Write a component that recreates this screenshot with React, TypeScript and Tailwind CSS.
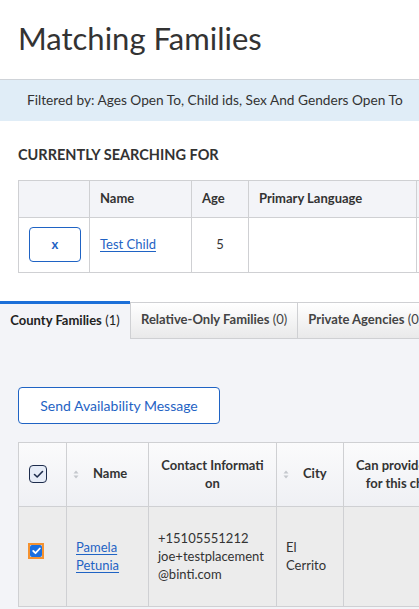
import React from "react";

const link = "text-[#1f63c4] underline underline-offset-2";

function SortIcon() {
  return (
    <svg width="6" height="9" viewBox="0 0 6 9" className="shrink-0">
      <path d="M3 0.5 L5.5 3.5 H0.5 Z" fill="#c4c7cc" />
      <path d="M3 8.5 L5.5 5.5 H0.5 Z" fill="#c4c7cc" />
    </svg>
  );
}

export default function App() {
  return (
    <div className="w-[419px] h-[609px] overflow-hidden bg-white text-[#333] font-['Lato','Noto_Sans',sans-serif]">
      {/* Title */}
      <div className="h-[79px] px-[18px] flex items-center">
        <h1 className="text-[31px] leading-none pb-[2px]">Matching Families</h1>
      </div>

      {/* Filter bar */}
      <div className="h-[42px] border-t border-[#cfd3d8] bg-[#e0edf7] px-[27px] flex items-center text-[13.7px] whitespace-nowrap">
        Filtered by: Ages Open To, Child ids, Sex And Genders Open To
      </div>

      {/* Currently searching */}
      <div className="px-[18px] pt-[27px]">
        <h2 className="text-[14.5px] font-bold leading-none whitespace-nowrap">CURRENTLY SEARCHING FOR</h2>
        <table className="mt-[17px] border-collapse text-[13px] w-[500px] table-fixed">
          <colgroup>
            <col className="w-[71px]" />
            <col className="w-[102px]" />
            <col className="w-[57px]" />
            <col className="w-[168px]" />
            <col />
          </colgroup>
          <thead>
            <tr className="h-[37px] bg-[#f3f4f8]">
              <th className="border border-[#cfd0d3]"></th>
              <th className="border border-[#cfd0d3] text-left font-bold px-[10px]">Name</th>
              <th className="border border-[#cfd0d3] text-left font-bold px-[10px]">Age</th>
              <th className="border border-[#cfd0d3] text-left font-bold px-[10px]">Primary Language</th>
              <th className="border border-[#cfd0d3]"></th>
            </tr>
          </thead>
          <tbody>
            <tr className="h-[55px]">
              <td className="border border-[#cfd0d3] px-[10px] align-middle">
                <button className="w-[52px] h-[35px] border border-[#1f63c4] rounded-[4px] text-[#1f63c4] font-bold text-[13px] flex items-center justify-center bg-white">
                  x
                </button>
              </td>
              <td className="border border-[#cfd0d3] px-[10px] align-middle">
                <a className={link} href="#">Test Child</a>
              </td>
              <td className="border border-[#cfd0d3] text-center align-middle">5</td>
              <td className="border border-[#cfd0d3]"></td>
              <td className="border border-[#cfd0d3]"></td>
            </tr>
          </tbody>
        </table>
      </div>

      {/* Tabs */}
      <div className="mt-[28px] flex items-end text-[13px] whitespace-nowrap">
        <div className="shrink-0 w-[130px] h-[38px] border-t-[3px] border-[#1b6fd8] bg-[#f3f4f8] flex items-center justify-center text-[#222]">
          <span><b>County Families</b> (1)</span>
        </div>
        <div className="shrink-0 h-[37px] px-[10px] border border-[#cfd0d3] bg-gradient-to-b from-white to-[#e9e9ea] flex items-center text-[#444]">
          <span><b>Relative-Only Families</b> (0)</span>
        </div>
        <div className="shrink-0 h-[37px] px-[10px] border border-l-0 border-[#cfd0d3] bg-gradient-to-b from-white to-[#e9e9ea] flex items-center text-[#444]">
          <span><b>Private Agencies</b> (0)</span>
        </div>
      </div>

      {/* Tab content */}
      <div className="bg-[#f3f4f8] px-[18px] pt-[48px] pb-[20px]">
        <button className="w-[202px] h-[37px] bg-white border border-[#1f63c4] rounded-[4px] text-[#1f63c4] text-[14px] flex items-center justify-center">
          Send Availability Message
        </button>

        <table className="mt-[18px] border-collapse text-[13px] w-[600px] table-fixed">
          <colgroup>
            <col className="w-[48px]" />
            <col className="w-[82px]" />
            <col className="w-[128px]" />
            <col className="w-[67px]" />
            <col className="w-[122px]" />
            <col />
          </colgroup>
          <thead>
            <tr className="h-[64px] bg-gradient-to-b from-[#fbfbfc] to-[#eff0f4]">
              <th className="border border-[#cfd0d3] align-middle">
                <div className="ml-[10px] w-[18px] h-[18px] rounded-[4px] border-[1.5px] border-[#1d2c4c] bg-[#e6ecf7] flex items-center justify-center">
                  <svg width="11" height="9" viewBox="0 0 11 9">
                    <path d="M1.5 4.5 L4.2 7 L9.5 1.5" fill="none" stroke="#1d2c4c" strokeWidth="1.6" strokeLinecap="round" strokeLinejoin="round" />
                  </svg>
                </div>
              </th>
              <th className="border border-[#cfd0d3] font-bold align-middle">
                <div className="flex items-center pl-[6px] gap-[14px]">
                  <SortIcon />
                  <span>Name</span>
                </div>
              </th>
              <th className="border border-[#cfd0d3] font-bold text-center leading-[18px] px-[10px] align-middle">
                Contact Informati<br />on
              </th>
              <th className="border border-[#cfd0d3] font-bold align-middle">
                <div className="flex items-center pl-[6px] gap-[14px]">
                  <SortIcon />
                  <span>City</span>
                </div>
              </th>
              <th className="border border-[#cfd0d3] font-bold text-center leading-[18px] px-[10px] align-middle">
                Can provide care for this child?
              </th>
              <th className="border border-[#cfd0d3]"></th>
            </tr>
          </thead>
          <tbody>
            <tr className="h-[100px] bg-[#ececec]">
              <td className="border border-[#cfd0d3] align-top pt-[36px] pl-[9px]">
                <div className="w-[16px] h-[16px] border-2 border-[#f5922f] flex items-center justify-center">
                  <div className="w-[12px] h-[12px] rounded-[2px] bg-[#1a6fe0] flex items-center justify-center">
                    <svg width="9" height="8" viewBox="0 0 9 8">
                      <path d="M1.3 4 L3.5 6.2 L7.8 1.5" fill="none" stroke="white" strokeWidth="1.8" strokeLinecap="round" strokeLinejoin="round" />
                    </svg>
                  </div>
                </div>
              </td>
              <td className="border border-[#cfd0d3] px-[9px] leading-[18px] align-middle">
                <a className={link} href="#">Pamela Petunia</a>
              </td>
              <td className="border border-[#cfd0d3] px-[9px] leading-[18px] break-all align-middle">
                +15105551212<br />joe+testplacement<br />@binti.com
              </td>
              <td className="border border-[#cfd0d3] px-[9px] leading-[18px] align-middle">
                El<br />Cerrito
              </td>
              <td className="border border-[#cfd0d3]"></td>
              <td className="border border-[#cfd0d3]"></td>
            </tr>
          </tbody>
        </table>
      </div>
    </div>
  );
}
